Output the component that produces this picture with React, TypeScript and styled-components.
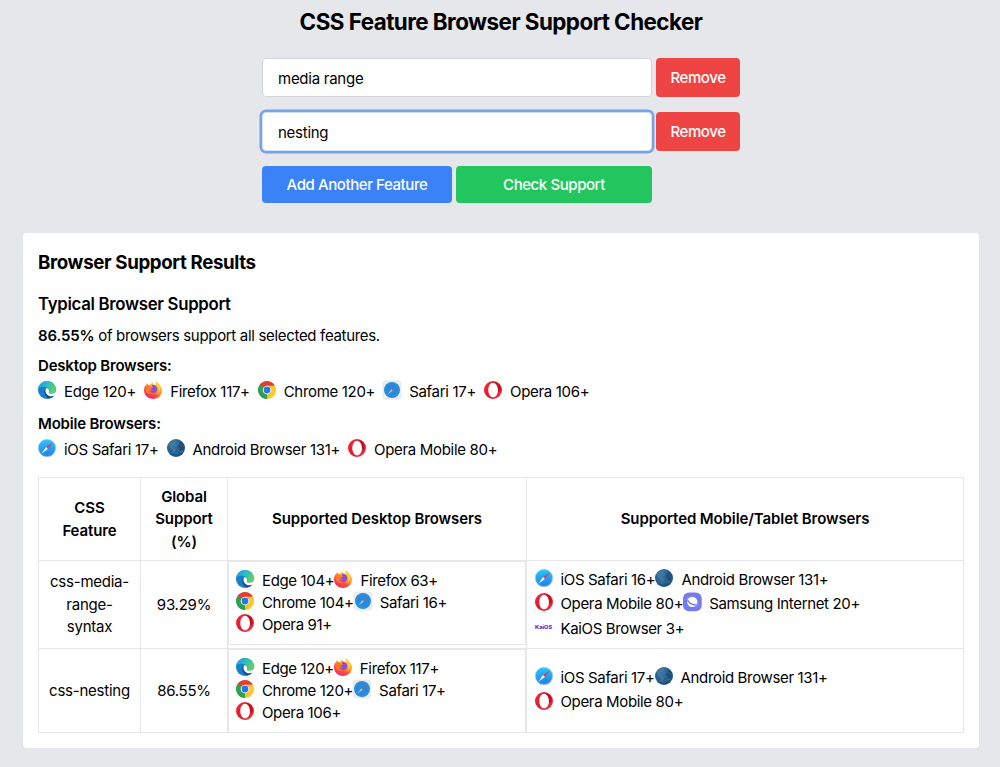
import React, { useState } from "react";
import styled, { createGlobalStyle, css } from "styled-components";

const GlobalStyle = createGlobalStyle`
  * {
    box-sizing: border-box;
  }
  body {
    margin: 0;
    background: #e5e7eb;
    color: #000;
    font-family: Inter, "Liberation Sans", sans-serif;
    font-size: 15px;
    line-height: 22px;
    letter-spacing: -0.32px;
  }
`;

type BrowserKey =
  | "edge"
  | "firefox"
  | "chrome"
  | "safari"
  | "opera"
  | "ios"
  | "android"
  | "samsung"
  | "kaios";

type SupportItem = {
  icon: BrowserKey;
  label: string;
};

type FeatureRow = {
  feature: string;
  support: string;
  desktop: SupportItem[][];
  mobile: SupportItem[][];
};

const typicalDesktop: SupportItem[] = [
  { icon: "edge", label: "Edge 120+" },
  { icon: "firefox", label: "Firefox 117+" },
  { icon: "chrome", label: "Chrome 120+" },
  { icon: "safari", label: "Safari 17+" },
  { icon: "opera", label: "Opera 106+" },
];

const typicalMobile: SupportItem[] = [
  { icon: "ios", label: "iOS Safari 17+" },
  { icon: "android", label: "Android Browser 131+" },
  { icon: "opera", label: "Opera Mobile 80+" },
];

const rows: FeatureRow[] = [
  {
    feature: "css-media-range-syntax",
    support: "93.29%",
    desktop: [
      [{ icon: "edge", label: "Edge 104+" }, { icon: "firefox", label: "Firefox 63+" }],
      [{ icon: "chrome", label: "Chrome 104+" }, { icon: "safari", label: "Safari 16+" }],
      [{ icon: "opera", label: "Opera 91+" }],
    ],
    mobile: [
      [{ icon: "ios", label: "iOS Safari 16+" }, { icon: "android", label: "Android Browser 131+" }],
      [{ icon: "opera", label: "Opera Mobile 80+" }, { icon: "samsung", label: "Samsung Internet 20+" }],
      [{ icon: "kaios", label: "KaiOS Browser 3+" }],
    ],
  },
  {
    feature: "css-nesting",
    support: "86.55%",
    desktop: [
      [{ icon: "edge", label: "Edge 120+" }, { icon: "firefox", label: "Firefox 117+" }],
      [{ icon: "chrome", label: "Chrome 120+" }, { icon: "safari", label: "Safari 17+" }],
      [{ icon: "opera", label: "Opera 106+" }],
    ],
    mobile: [
      [{ icon: "ios", label: "iOS Safari 17+" }, { icon: "android", label: "Android Browser 131+" }],
      [{ icon: "opera", label: "Opera Mobile 80+" }],
    ],
  },
];

const Page = styled.div`
  width: 1000px;
  height: 767px;
  padding: 6px 21px 0 23px;
  overflow: hidden;
`;

const Title = styled.h1`
  margin: 0;
  font-size: 22.4px;
  line-height: 31px;
  font-weight: 700;
  letter-spacing: -0.53px;
  text-align: center;
`;

const Form = styled.div`
  display: flex;
  flex-direction: column;
  gap: 15px;
  width: 478px;
  margin: 21px 0 0 239px;
`;

const FieldRow = styled.div`
  display: flex;
  gap: 4px;
`;

const Field = styled.input<{ $active: boolean }>`
  width: 390px;
  height: 39px;
  padding: 1px 15px 0;
  border: 1px solid #d1d5db;
  border-radius: 4px;
  outline: none;
  background: #fff;
  color: #000;
  font: inherit;
  letter-spacing: -0.26px;
  ${(p) =>
    p.$active &&
    css`
      border-color: #d3e0f5;
      box-shadow: 0 0 0 2.5px #75a5e8;
    `}
`;

const Button = styled.button<{ $bg: string; $width: number; $height: number }>`
  width: ${(p) => p.$width}px;
  height: ${(p) => p.$height}px;
  padding: 1px 0 0;
  border: 0;
  border-radius: 4px;
  background: ${(p) => p.$bg};
  color: #fff;
  font: inherit;
  font-weight: 500;
  letter-spacing: -0.42px;
`;

const Card = styled.section`
  height: 515px;
  margin-top: 30px;
  padding: 16px 15px 15px;
  border-radius: 4px;
  background: #fff;
`;

const Heading = styled.h2`
  margin: 0;
  font-size: 18.7px;
  line-height: 28px;
  font-weight: 700;
  letter-spacing: -0.37px;
`;

const SubHeading = styled.h3`
  margin: 13px 0 0;
  font-size: 16.8px;
  line-height: 28px;
  font-weight: 600;
  letter-spacing: -0.3px;
`;

const Summary = styled.p`
  margin: 7px 0 0;
`;

const Strong = styled.strong`
  font-weight: 600;
  letter-spacing: -0.15px;
`;

const GroupLabel = styled.div<{ $top: number }>`
  margin-top: ${(p) => p.$top}px;
  font-weight: 600;
  letter-spacing: -0.2px;
`;

const Line = styled.div<{ $gap?: number; $height?: number }>`
  display: flex;
  gap: ${(p) => p.$gap || 0}px;
  height: ${(p) => p.$height || 22}px;
  align-items: center;
  white-space: nowrap;
`;

const TypicalList = styled(Line)`
  margin-top: 4px;
`;

const Entry = styled.span`
  display: flex;
  align-items: center;
  gap: 8px;

  svg {
    flex: none;
    margin-bottom: 4px;
    overflow: visible;
  }
`;

const Table = styled.div`
  display: grid;
  grid-template-columns: 102px 87px 299px 437px;
  grid-template-rows: 83px 88px 84px;
  width: 926px;
  margin-top: 16px;
  border: solid #e5e7eb;
  border-width: 1px 0 0 1px;
`;

const Cell = styled.div<{ $head?: boolean }>`
  display: flex;
  align-items: center;
  justify-content: center;
  padding: 1px 8px 0;
  border: solid #e5e7eb;
  border-width: 0 1px 1px 0;
  font-weight: ${(p) => (p.$head ? 600 : 400)};
  letter-spacing: ${(p) => (p.$head ? -0.1 : -0.24)}px;
  line-height: 22.4px;
  text-align: center;
`;

const ListCell = styled(Cell)`
  flex-direction: column;
  align-items: flex-start;
  padding: 0 0 0 7.5px;
  letter-spacing: -0.35px;
`;

/* the desktop list draws its own frame inside the cell */
const FramedCell = styled(ListCell)`
  display: block;
  padding: 0;
`;

const Frame = styled.div`
  height: 84px;
  padding: 7.5px 0 0 7px;
  border: 1px solid #e5e7eb;
`;

const icons: Record<BrowserKey, React.ReactNode> = {
  edge: (
    <>
      <defs>
        <linearGradient id="edgeTop" x1="0" y1="0" x2="1" y2="0.5">
          <stop offset="0" stopColor="#2593d6" />
          <stop offset="0.5" stopColor="#2db9cb" />
          <stop offset="1" stopColor="#5cd35c" />
        </linearGradient>
      </defs>
      <circle cx="9" cy="9" r="9" fill="#157fcb" />
      <path d="M.2 7.7C1 3.2 4.5 0 9 0c5 0 9 3.5 9 8 0 2.8-2.1 4.7-4.8 4.7-2 0-3.1-.8-2.2-1.9.9-1.3.5-4.3-3.6-4.8C4 5.6 1.5 6 .2 7.7Z" fill="url(#edgeTop)" />
      <path d="M7.3 7.7c-2.4 3.1.1 8.7 4 9.9 2.4-.3 4.1-1.5 5.4-3.5-4.7 1.6-8.5-1.3-9.4-6.4Z" fill="#104c90" />
      <path d="M8.2 7.4c2-.5 3.2 1.2 2.8 3-.8 1.4.3 2.2 2.3 2.3 2 0 3.6-1 4.5-2.3l.8.3-.2 3.4-1.7.5c-3.5 1.6-7.3.3-8.6-2.4-.9-1.8-.8-3.6.1-4.8Z" fill="#fff" />
    </>
  ),
  firefox: (
    <>
      <defs>
        <linearGradient id="foxBody" x1="0.9" y1="0" x2="0.25" y2="1">
          <stop offset="0" stopColor="#ffe04a" />
          <stop offset="0.38" stopColor="#ffae22" />
          <stop offset="0.68" stopColor="#ff5138" />
          <stop offset="1" stopColor="#ef2570" />
        </linearGradient>
      </defs>
      <path d="M2.6 2.3 4.7 4l1.7-.2C7 2.7 7.8 2 8.8 1.6c-.1 1 .2 1.6 1 1.9l2.3.8C11.6 2.6 11.4.7 12 .1c1.4 2 5.8 4.7 6 9.4.1 4.8-4 8.5-9 8.5s-9-3.7-9-8.7c0-2.2.8-3.9 1.7-5.3l.2 1.2Z" fill="url(#foxBody)" />
      <path d="M8 4.2c2.2-.7 4.6.6 5.1 2.9.5 2.6-1.1 4.9-3.6 4.9-2 0-3.5-1.1-3.7-2.7 1.2.8 2.4.7 3.7-.3-1.6 0-2.6-.5-3.1-1.6L9 6.3c-.7-.3-1-.9-1-2.1Z" fill="#8a4ddb" />
      <path d="M2.7 5.2c2-.7 3.2-.3 4 .8h2.4c.3 1.1-1.9 1-2.2 2.2-.1.9-1 1.5-2 1.7.8 1.3 2.5 2.4 4.3 2.1-2.4 1.7-6.4.8-7.4-2.2-.5-1.8.1-3.5.9-4.6Z" fill="#ff782c" />
      <path d="M12 1c.6 3.8 3 5 2.5 8.9-.2 1.8-1.6 3.3-3.2 3.7 4.7-.3 6.5-6.2 2.8-9.6Z" fill="#ffda43" opacity="0.75" />
    </>
  ),
  chrome: (
    <>
      <path d="M9 9 1.2 4.5A9 9 0 0 1 16.8 4.5Z" fill="#dd4032" />
      <path d="M9 9 16.8 4.5A9 9 0 0 1 9 18Z" fill="#fcc92b" />
      <path d="M1.2 4.5A9 9 0 0 0 9 18l4-7H9Z" fill="#31a04e" />
      <path d="M1.2 4.5 5.1 11.3 9 9 5.1 5Z" fill="#31a04e" />
      <path d="M9 18 12.8 11.3 9 9Z" fill="#fcc92b" />
      <path d="M8.9 4.8h7.9l.6 1.1H12Z" fill="#fcc92b" />
      <circle cx="9" cy="9" r="4.3" fill="#fff" />
      <circle cx="9" cy="9" r="3.4" fill="#2f75df" />
    </>
  ),
  safari: (
    <>
      <rect x="0" y="0" width="18" height="18" rx="3" fill="#efefef" stroke="#dcdde0" strokeWidth="0.6" />
      <circle cx="9" cy="9" r="8" fill="#278bdd" />
      <circle cx="9" cy="9" r="6.9" fill="none" stroke="#4ba7e8" strokeWidth="0.7" strokeDasharray="0.5 1" />
      <path d="m13.4 4.6-5.2 3.7 1.5 1.5Z" fill="#a4646d" />
      <path d="m4.6 13.4 3.6-5.1 1.5 1.5Z" fill="#a5c9e4" />
    </>
  ),
  opera: (
    <>
      <defs>
        <linearGradient id="operaRing" x1="0" y1="0" x2="1" y2="1">
          <stop offset="0" stopColor="#ff2638" />
          <stop offset="0.5" stopColor="#df1b2c" />
          <stop offset="1" stopColor="#ed3547" />
        </linearGradient>
      </defs>
      <path fillRule="evenodd" d="M9 0a9 9 0 1 1 0 18A9 9 0 0 1 9 0Zm.1 1.7C6.2 1.7 4.3 5 4.3 9s1.9 7.3 4.8 7.3S14 13 14 9 12 1.7 9.1 1.7Z" fill="url(#operaRing)" />
      <path d="M9.1 1.7c2.7-1.2 5 .2 6.4 2.3 1.4 2 1.5 4.5.7 7l-2.3-.7c.6-5-1.7-8.6-4.8-8.6Z" fill="#b50c1b" opacity="0.75" />
    </>
  ),
  ios: (
    <>
      <defs>
        <linearGradient id="iosFace" x1="0" y1="0" x2="0" y2="1">
          <stop offset="0" stopColor="#27c6fb" />
          <stop offset="1" stopColor="#247ce9" />
        </linearGradient>
      </defs>
      <circle cx="9" cy="9" r="8.7" fill="url(#iosFace)" stroke="#9bcdf2" strokeWidth="0.6" />
      <circle cx="9" cy="9" r="7.3" fill="none" stroke="#74cff8" strokeWidth="0.7" strokeDasharray="0.3 1.1" />
      <path d="m14.8 3.2-6.7 4.9 1.8 1.8Z" fill="#d63f58" />
      <path d="m3.2 14.8 4.9-6.7 1.8 1.8Z" fill="#eff5fb" />
    </>
  ),
  android: (
    <>
      <defs>
        <radialGradient id="globeShade" cx="0.4" cy="0.3" r="0.75">
          <stop offset="0" stopColor="#3577aa" />
          <stop offset="1" stopColor="#1c4c78" />
        </radialGradient>
      </defs>
      <circle cx="9" cy="9" r="9" fill="url(#globeShade)" />
      <path d="m1.6 5.7 2-3.2 3-1.6 4 .5-1.8 1.5-1.2 2-2.4.5-.7 1.7 2.2 1.1 2.5 2.2-1 2.7-1.9 1.4-1-3.4-2.2-2.3Z" fill="#55849d" opacity="0.5" />
      <path d="m11 5.3 2.4-2.4 2.2 1 1.6 3.2-1.1 3.1-2.5 1.5-1.2-2.6-2-1.2Z" fill="#183d60" opacity="0.55" />
      <path d="m1 12 4 2 3 .5 5-2 3 .3M2 4l4 3 6-2 5 3" fill="none" stroke="#438cb9" strokeWidth="0.45" opacity="0.8" />
    </>
  ),
  samsung: (
    <>
      <rect x="0" y="-0.5" width="18.7" height="18.7" rx="6" fill="#7779ef" />
      <circle cx="9.3" cy="8.9" r="5.2" fill="#fff" />
      <path d="M4.2 6.5c1.4 3.2 5.3 5.7 10 5.4" fill="none" stroke="#7779ef" strokeWidth="1.5" />
      <path d="M5.2 7.7C3 5 4.2 3.9 6.6 4.6M14.1 9.8c2.2 2.3 1 3.7-1.6 3" fill="none" stroke="#a3a4fa" strokeWidth="0.9" />
    </>
  ),
  kaios: (
    <text x="0" y="10.8" fontFamily="Inter, sans-serif" fontSize="5.4" fontWeight="800" letterSpacing="0" textLength="17.2" lengthAdjust="spacingAndGlyphs" fill="#7424c8">
      KaiOS
    </text>
  ),
};

const BrowserIcon = ({ name }: { name: BrowserKey }) => (
  <svg width="18" height="18" viewBox="0 0 18 18" aria-hidden="true">
    {icons[name]}
  </svg>
);

const BrowserEntry = ({ icon, label }: SupportItem) => (
  <Entry>
    <BrowserIcon name={icon} />
    <span>{label}</span>
  </Entry>
);

const SupportLines = ({ lines, height }: { lines: SupportItem[][]; height: number }) => (
  <>
    {lines.map((line, i) => (
      <Line key={i} $height={height}>
        {line.map((item) => (
          <BrowserEntry key={item.label} {...item} />
        ))}
      </Line>
    ))}
  </>
);

const App = () => {
  const [features, setFeatures] = useState(["media range", "nesting"]);
  const [active, setActive] = useState(1);

  const updateFeature = (index: number, value: string) => {
    setFeatures(features.map((f, i) => (i === index ? value : f)));
  };

  return (
    <Page>
      <GlobalStyle />
      <Title>CSS Feature Browser Support Checker</Title>
      <Form>
        {features.map((feature, i) => (
          <FieldRow key={i}>
            <Field
              $active={i === active}
              value={feature}
              onFocus={() => setActive(i)}
              onChange={(e) => updateFeature(i, e.target.value)}
            />
            <Button
              $bg="#ef4444"
              $width={84}
              $height={39}
              onClick={() => setFeatures(features.filter((_, n) => n !== i))}
            >
              Remove
            </Button>
          </FieldRow>
        ))}
        <FieldRow>
          <Button $bg="#3b82f6" $width={190} $height={37} onClick={() => setFeatures([...features, ""])}>
            Add Another Feature
          </Button>
          <Button $bg="#22c55e" $width={196} $height={37}>
            Check Support
          </Button>
        </FieldRow>
      </Form>

      <Card>
        <Heading>Browser Support Results</Heading>
        <SubHeading>Typical Browser Support</SubHeading>
        <Summary>
          <Strong>86.55%</Strong> of browsers support all selected features.
        </Summary>
        <GroupLabel $top={8}>Desktop Browsers:</GroupLabel>
        <TypicalList $gap={8}>
          {typicalDesktop.map((item) => (
            <BrowserEntry key={item.label} {...item} />
          ))}
        </TypicalList>
        <GroupLabel $top={10}>Mobile Browsers:</GroupLabel>
        <TypicalList $gap={8}>
          {typicalMobile.map((item) => (
            <BrowserEntry key={item.label} {...item} />
          ))}
        </TypicalList>

        <Table>
          <Cell $head>CSS Feature</Cell>
          <Cell $head>Global Support (%)</Cell>
          <Cell $head>Supported Desktop Browsers</Cell>
          <Cell $head>Supported Mobile/Tablet Browsers</Cell>
          {rows.map((row) => (
            <React.Fragment key={row.feature}>
              <Cell>{row.feature}</Cell>
              <Cell>{row.support}</Cell>
              <FramedCell>
                <Frame>
                  <SupportLines lines={row.desktop} height={22.4} />
                </Frame>
              </FramedCell>
              <ListCell>
                <SupportLines lines={row.mobile} height={24.4} />
              </ListCell>
            </React.Fragment>
          ))}
        </Table>
      </Card>
    </Page>
  );
};

export default App;
